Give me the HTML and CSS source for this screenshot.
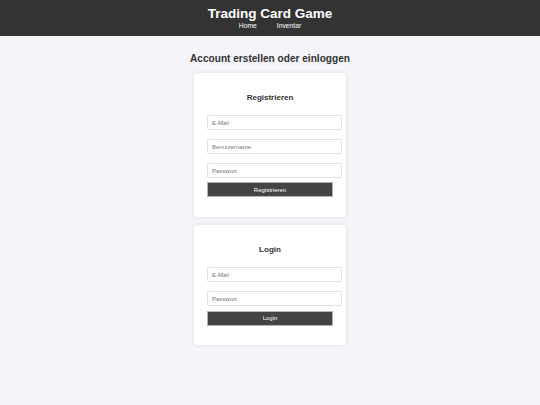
FILE: index.html
```html
<!DOCTYPE html>
<html lang="de">
<head>
<meta charset="utf-8">
<title>Trading Card Game</title>
<link rel="stylesheet" href="styles.css">
</head>
<body>
<header class="site-header">
  <h1 class="site-title">Trading Card Game</h1>
  <nav class="site-nav">
    <a href="#" class="nav-link">Home</a>
    <a href="#" class="nav-link">Inventar</a>
  </nav>
</header>
<main class="main">
  <h2 class="page-title">Account erstellen oder einloggen</h2>
  <section class="card">
    <h3 class="card-title">Registrieren</h3>
    <form class="form">
      <input class="field" type="email" placeholder="E-Mail">
      <input class="field" type="text" placeholder="Benutzername">
      <input class="field" type="password" placeholder="Passwort">
      <button class="btn" type="button">Registrieren</button>
    </form>
  </section>
  <section class="card card-login">
    <h3 class="card-title">Login</h3>
    <form class="form">
      <input class="field" type="email" placeholder="E-Mail">
      <input class="field" type="password" placeholder="Passwort">
      <button class="btn" type="button">Login</button>
    </form>
  </section>
</main>
</body>
</html>
```
FILE: styles.css
```css
html, body {
  margin: 0;
  padding: 0;
}
body {
  background: #f4f4f9;
  font-family: "Liberation Sans", Arial, sans-serif;
  color: #333;
  min-height: 405px;
}
.site-header {
  background: #333;
  color: #fff;
  height: 36px;
  box-sizing: border-box;
  padding-top: 7px;
  display: flex;
  flex-direction: column;
  align-items: center;
}
.site-title {
  margin: 0;
  font-size: 13.5px;
  line-height: 14px;
  font-weight: bold;
}
.site-nav {
  display: flex;
  gap: 20px;
  margin-top: 0.5px;
}
.nav-link {
  color: #fff;
  text-decoration: none;
  font-size: 6.75px;
  line-height: 8px;
}
.main {
  display: flex;
  flex-direction: column;
  align-items: center;
}
.page-title {
  margin: 17px 0 8px;
  font-size: 10.1px;
  line-height: 12px;
  font-weight: bold;
  color: #333;
}
.card {
  width: 152px;
  box-sizing: border-box;
  background: #fff;
  border-radius: 4px;
  box-shadow: 0 0 4px rgba(0, 0, 0, 0.1);
  padding: 20px 13px 20px;
  margin-bottom: 8px;
}
.card-login {
  padding-bottom: 19.5px;
}
.card-title {
  margin: 0 0 13px;
  text-align: center;
  font-size: 8px;
  line-height: 9px;
  font-weight: bold;
  color: #333;
}
.form {
  display: flex;
  flex-direction: column;
  align-items: flex-start;
}
.field {
  box-sizing: border-box;
  width: calc(100% + 9px);
  height: 15px;
  margin: 0 0 9px;
  padding: 0 4px;
  border: 1px solid #e2e2e2;
  border-radius: 2px;
  font-family: "Liberation Sans", Arial, sans-serif;
  font-size: 6px;
  color: #333;
  background: #fff;
  outline: none;
}
.field:last-of-type {
  margin-bottom: 4px;
}
.card-login .field:last-of-type {
  margin-bottom: 4.5px;
}
.field::placeholder {
  color: #777;
}
.btn {
  box-sizing: border-box;
  width: 100%;
  height: 15px;
  margin: 0;
  padding: 0;
  background: #444;
  color: #fff;
  border: 1px solid #b5b5b5;
  font-family: "Liberation Sans", Arial, sans-serif;
  font-size: 6px;
  cursor: pointer;
}
```
